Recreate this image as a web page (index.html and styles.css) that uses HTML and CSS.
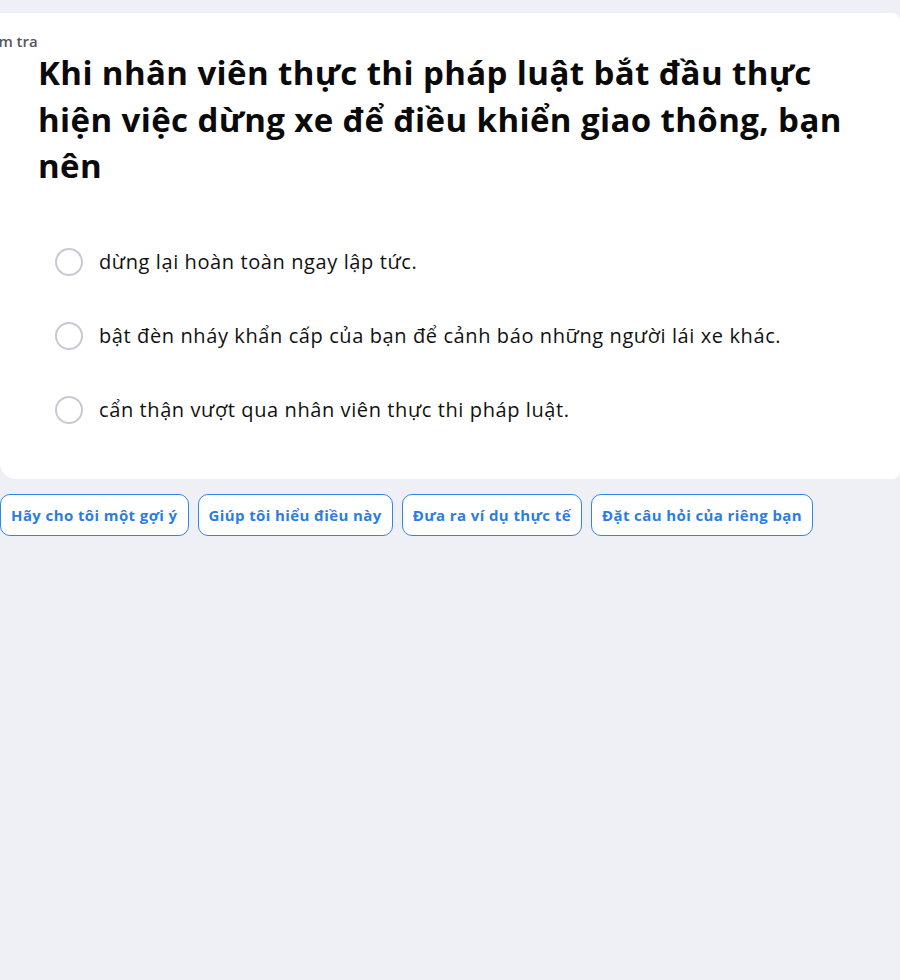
FILE: index.html
```html
<!DOCTYPE html>
<html lang="vi">
<head>
<meta charset="utf-8">
<title>Kiểm tra</title>
<link rel="stylesheet" href="styles.css">
</head>
<body>
<main class="page">
  <section class="card">
    <div class="label">Kiểm tra</div>
    <h1 class="question">Khi nhân viên thực thi pháp luật bắt đầu thực hiện việc dừng xe để điều khiển giao thông, bạn nên</h1>
    <ul class="options">
      <li class="option"><span class="radio"></span><span class="option-text">dừng lại hoàn toàn ngay lập tức.</span></li>
      <li class="option"><span class="radio"></span><span class="option-text">bật đèn nháy khẩn cấp của bạn để cảnh báo những người lái xe khác.</span></li>
      <li class="option"><span class="radio"></span><span class="option-text">cẩn thận vượt qua nhân viên thực thi pháp luật.</span></li>
    </ul>
  </section>
  <div class="actions">
    <button class="chip">Hãy cho tôi một gợi ý</button>
    <button class="chip">Giúp tôi hiểu điều này</button>
    <button class="chip">Đưa ra ví dụ thực tế</button>
    <button class="chip">Đặt câu hỏi của riêng bạn</button>
  </div>
</main>
</body>
</html>
```
FILE: styles.css
```css
html, body {
  margin: 0;
  padding: 0;
  background: #eff0f5;
  font-family: "Open Sans", "Noto Sans", sans-serif;
  overflow: hidden;
}
.page {
  padding-top: 13px;
  width: 900px;
}
.card {
  background: #ffffff;
  border-radius: 0 8px 8px 16px;
  padding: 19px 22px 32px 38px;
  overflow: hidden;
}
.label {
  margin-left: -62px;
  font-size: 15px;
  font-weight: 600;
  color: #555560;
  line-height: 18px;
}
.question {
  margin: 0;
  font-size: 33px;
  font-weight: 700;
  line-height: 46.5px;
  letter-spacing: 0.4px;
  color: #0a0a0a;
}
.options {
  list-style: none;
  margin: 35px 0 0 0;
  padding: 0;
}
.option {
  display: flex;
  align-items: center;
  gap: 16px;
  height: 74px;
  padding-left: 17px;
}
.radio {
  box-sizing: border-box;
  width: 28px;
  height: 28px;
  border: 2px solid #c9c9d6;
  border-radius: 50%;
  flex: none;
}
.option-text {
  font-size: 20px;
  letter-spacing: 0.6px;
  color: #111111;
}
.actions {
  display: flex;
  gap: 9px;
  margin-top: 15px;
}
.chip {
  height: 42px;
  padding: 0 10px;
  background: #ffffff;
  border: 1px solid #2f86e8;
  border-radius: 10px;
  color: #2b7de0;
  font-family: "Open Sans", "Noto Sans", sans-serif;
  font-size: 15px;
  font-weight: 700;
  letter-spacing: 0.4px;
}
```
